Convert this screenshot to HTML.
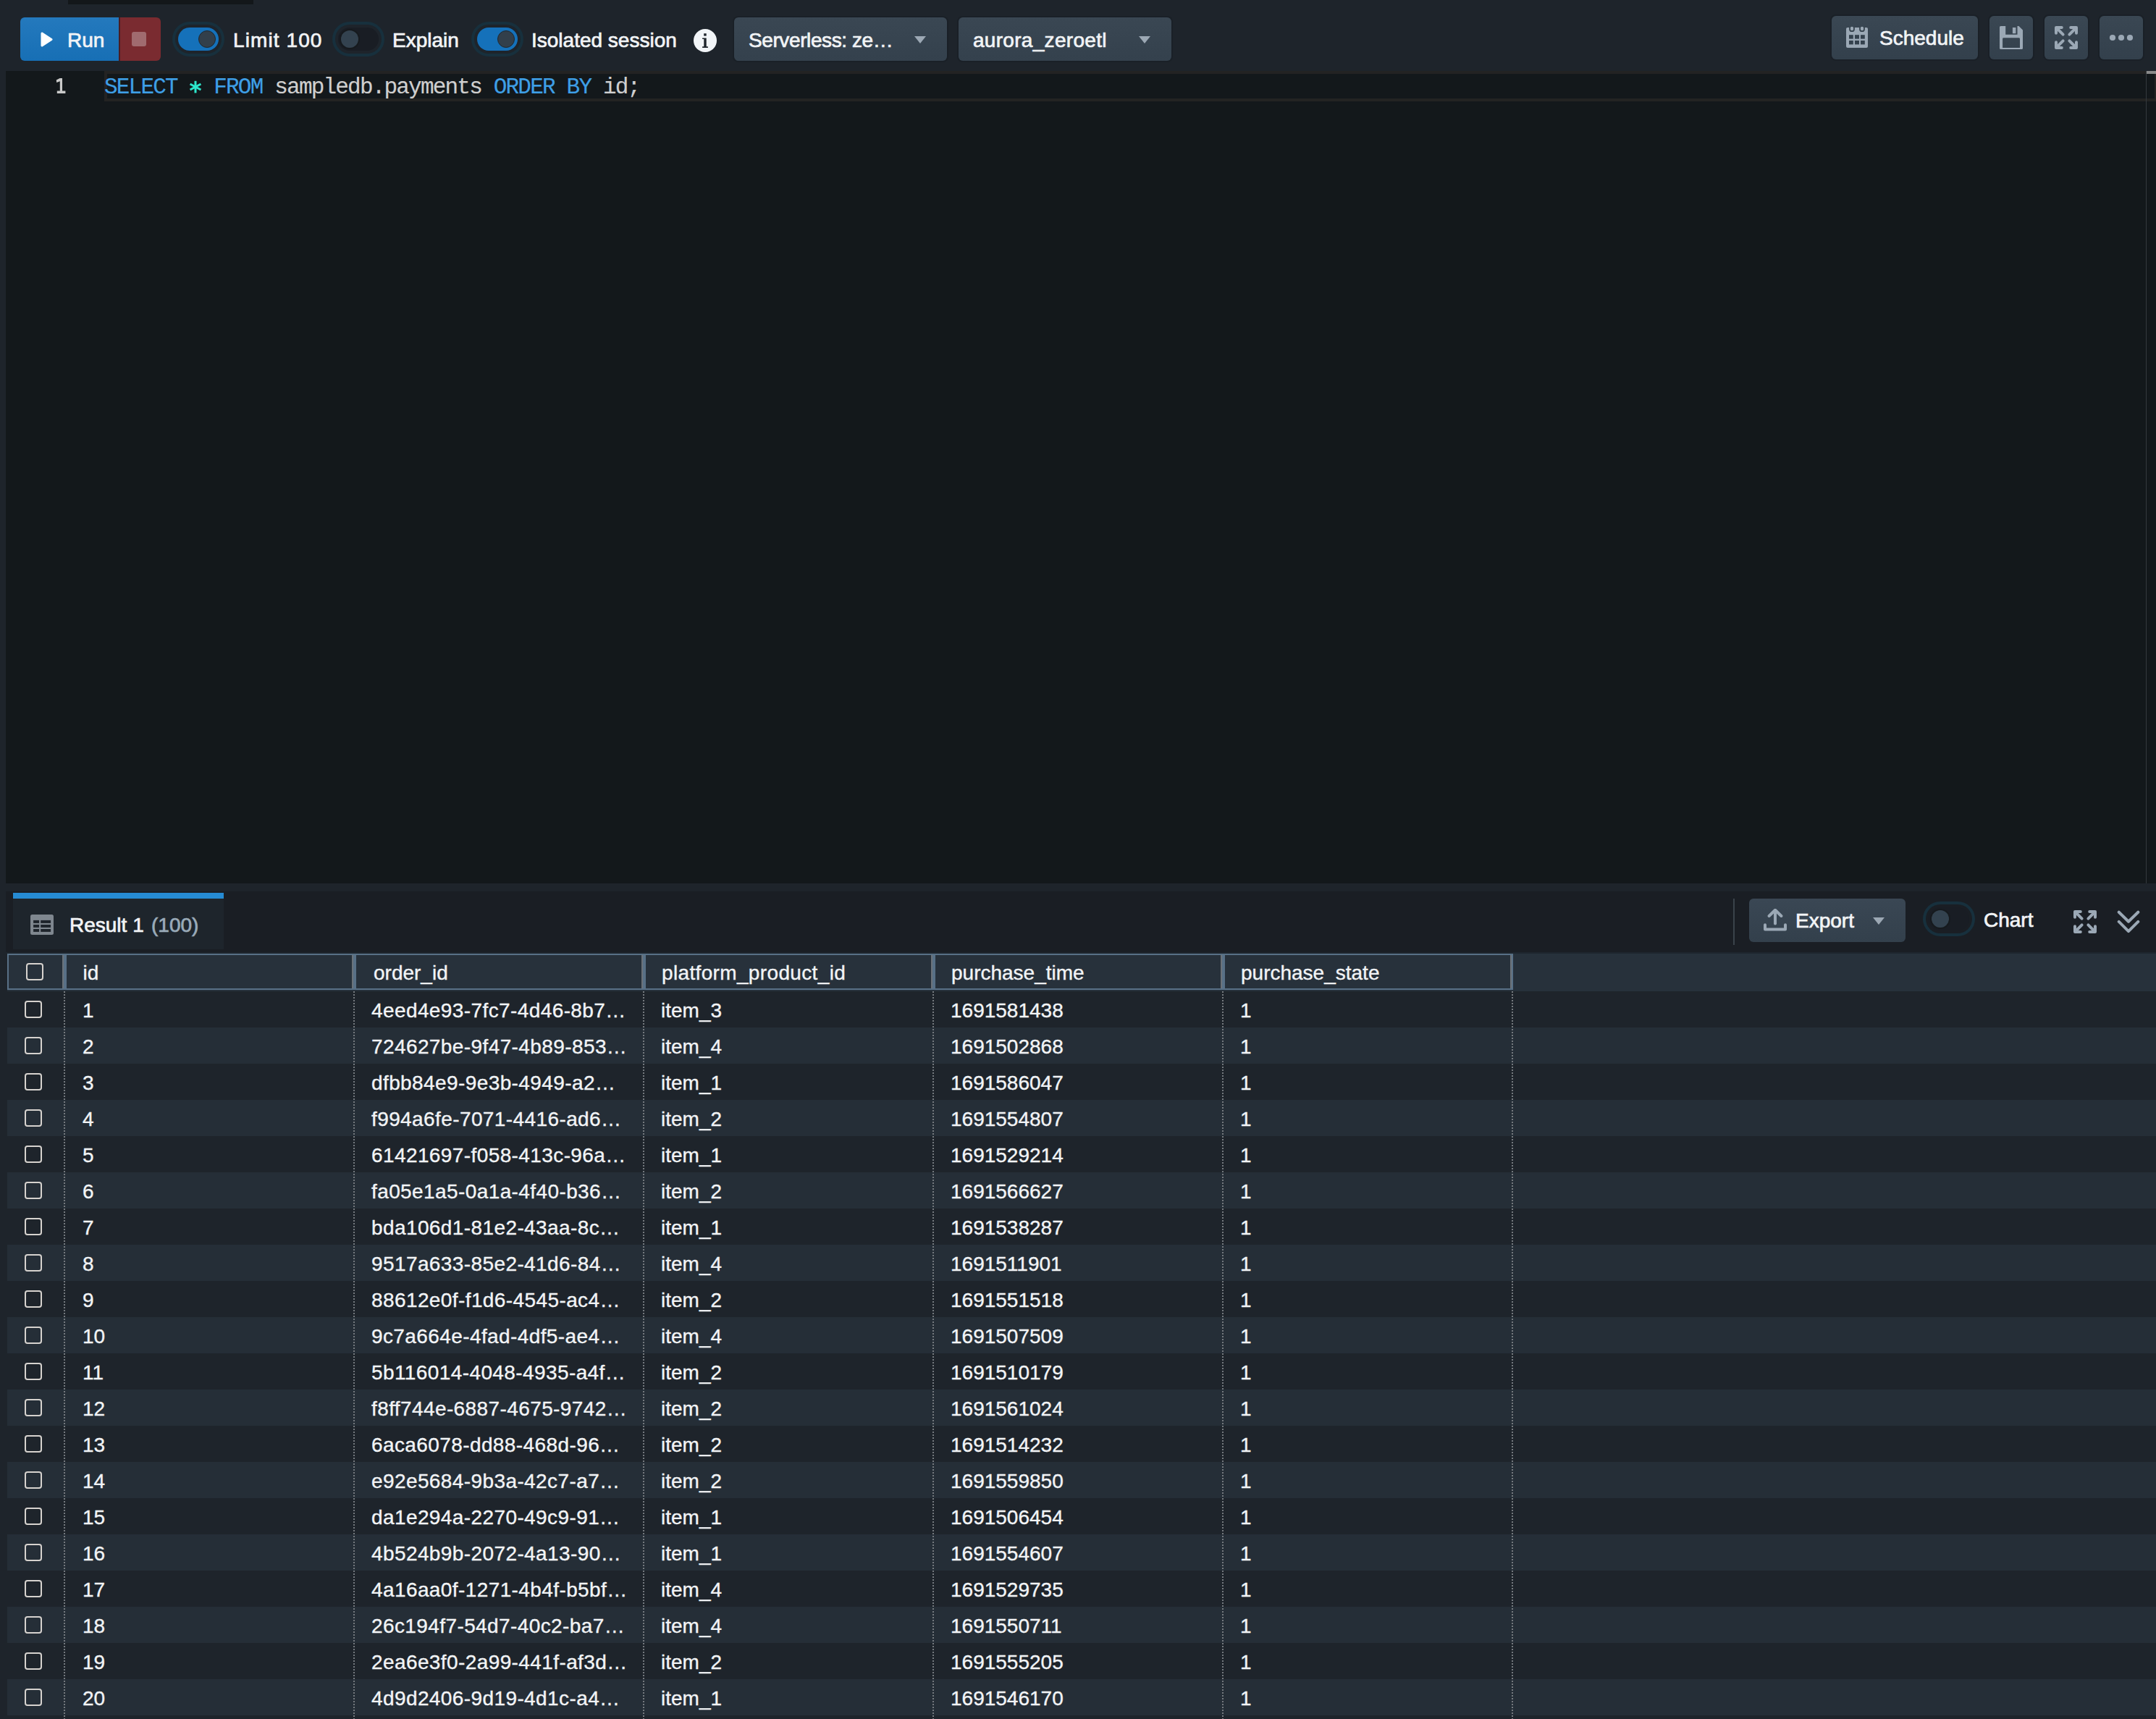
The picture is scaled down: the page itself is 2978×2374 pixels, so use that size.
<!DOCTYPE html>
<html><head><meta charset="utf-8"><title>Query editor</title>
<style>
html,body{margin:0;padding:0}
body{width:2978px;height:2374px;overflow:hidden;position:relative;background:#1e242b;font-family:"Liberation Sans",sans-serif;color:#f2f4f6;font-size:28px;-webkit-text-stroke:0.35px currentColor}
.abs{position:absolute}
#tabstrip{left:94px;top:0;width:256px;height:6px;background:#13171a}
/* run button */
#run{left:28px;top:24px;width:136px;height:60px;border-radius:6px 0 0 6px;background:linear-gradient(#2479bd,#176fb5)}
#run .tri{position:absolute;left:28px;top:20px;width:0;height:0;border-left:16px solid #fff;border-top:10px solid transparent;border-bottom:10px solid transparent;border-radius:2px}
#run .lbl{position:absolute;left:67px;top:0;line-height:60px;padding-top:2px}
#runsep{left:164px;top:24px;width:2px;height:60px;background:#4a1d22}
#stop{left:166px;top:24px;width:56px;height:60px;border-radius:0 6px 6px 0;background:#7a2b30}
#stop .sq{position:absolute;left:16px;top:20px;width:20px;height:20px;border-radius:3px;background:#a06b6f}
/* toggles */
.tg{position:absolute;width:72px;height:48px;border-radius:24px;background:#17303d}
.tg .track{position:absolute;left:8px;top:8px;width:56px;height:32px;border-radius:16px;background:#191d24;box-shadow:0 0 0 4px #1e242b}
.tg.on .track{background:#1571ba}
.tg .knob{position:absolute;top:4px;left:4px;width:24px;height:24px;border-radius:50%;background:#33424f;box-shadow:0 0 0 2px #161a1e}
.tg.on .knob{left:28px;top:4px;box-sizing:border-box;border:1.5px solid #1f2830;background:#323f4b;box-shadow:none}
#chartTg .track{box-shadow:0 0 0 4px #1a1e24}
.tl{position:absolute;line-height:60px;top:26px}
/* info */
#info{left:958px;top:40px;width:32px;height:32px;border-radius:50%;background:#f2f5f8}
/* dropdowns */
.dd{position:absolute;top:24px;height:60px;border-radius:6px;background:linear-gradient(#3a4753,#34414d);box-shadow:0 0 0 2px #1a2027}
.dd .t{position:absolute;left:20px;top:2px;line-height:60px}
.caret{position:absolute;width:0;height:0;border-top:10px solid #9ca8b4;border-left:8.5px solid transparent;border-right:8.5px solid transparent}
/* right buttons */
.btn{position:absolute;top:22px;height:60px;border-radius:6px;background:linear-gradient(#3a4753,#33404c);box-shadow:0 0 0 2px #1a2027}
/* editor */
#editor{left:8px;top:98px;width:2970px;height:1122px;background:#13181b;overflow:hidden}
#curline{left:136px;top:0;width:2828px;height:34px;border:4px solid #232323}
#ln{left:67px;top:0;line-height:42px;font-family:"Liberation Mono",monospace;color:#c8c8c8;font-size:32px;padding-top:3px}
#code{left:136px;top:0;line-height:42px;font-family:"Liberation Mono",monospace;color:#cfcfcf;font-size:31px;letter-spacing:-1.8px;white-space:pre;padding-top:2px;-webkit-text-stroke:0.15px currentColor}
.kw{color:#3e9fe6}.op{color:#2fe3c7}
#ruler{left:2956px;top:0;width:1px;height:1122px;background:#33393d}
#rulermark{left:2957px;top:0;width:14px;height:4px;background:#8a8a8a}
/* results */
#results{left:8px;top:1231px;width:2970px;height:84px;background:#1a1e24}
#tab{left:10px;top:2px;width:291px;height:78px;background:#1e252c}
#tab .bar{position:absolute;left:0;top:0;width:291px;height:8px;background:#268bd3}
#tabicon{left:24px;top:30px;width:32px;height:28px}
#tab .t{position:absolute;left:78px;top:24px;line-height:40px;padding-top:1px;white-space:pre}
#tab .cnt{color:#9aabb9}
#rsep{left:2386px;top:10px;width:2px;height:64px;background:#3a434b}
#export{left:2408px;top:10px;width:216px;height:60px;border-radius:6px;background:linear-gradient(#3a4754,#33404c)}
#hdrline{left:8px;top:1315px;width:2970px;height:2px;background:#1e262e}
#hdr{left:10px;top:1317px;width:2968px;height:52px;background:#27313b}
#hdrbox{left:10px;top:1317px;width:2076px;height:46px;border:2px solid #587086}
.hd{position:absolute;top:1317px;height:50px;line-height:50px;padding-top:2px}
.vd{position:absolute;top:1319px;height:46px;width:2px;background:#6b7279}
.vb{position:absolute;top:1317px;height:50px;width:4px;background:#587086}
.row{position:absolute;left:10px;width:2968px;height:50px}
.odd{background:#1e242b}.even{background:#252e37}
.row .c{position:absolute;top:0;line-height:50px;padding-top:2px;white-space:pre}
.cb{position:absolute;top:13px;width:20px;height:20px;border:2px solid #d6d2ce;border-radius:4px}
.dot{position:absolute;top:1369px;width:2px;height:1005px;background:repeating-linear-gradient(#74797e 0 2px,transparent 2px 4px)}
.tl,.dd .t,.bt,#run .lbl,#tab .t{-webkit-text-stroke:0.7px currentColor}

</style></head>
<body>
<div id="tabstrip" class="abs"></div>
<div id="run" class="abs"><svg class="abs" style="left:28px;top:20px" width="17" height="21" viewBox="0 0 17 21"><path d="M2,2 L15,10.5 L2,19 Z" fill="#fff" stroke="#fff" stroke-width="3" stroke-linejoin="round"/></svg><span class="lbl" style="left:65px">Run</span></div>
<div id="runsep" class="abs"></div>
<div id="stop" class="abs"><div class="sq"></div></div>

<div class="tg on" style="left:238px;top:30px"><div class="track"><div class="knob"></div></div></div>
<span class="tl" style="left:322px;letter-spacing:1.1px">Limit 100</span>
<div class="tg" style="left:459px;top:30px"><div class="track"><div class="knob"></div></div></div>
<span class="tl" style="left:542px">Explain</span>
<div class="tg on" style="left:651px;top:30px"><div class="track"><div class="knob"></div></div></div>
<span class="tl" style="left:734px">Isolated session</span>
<svg class="abs" style="left:958px;top:40px" width="32" height="32" viewBox="0 0 32 32"><circle cx="16" cy="16" r="16" fill="#f2f5f8"/><rect x="14.2" y="6.2" width="3.5" height="3.4" fill="#1e242b"/><path d="M12.1,12.4 H17.7 V24.3 H19.9 V26 H12.1 V24.3 H14.3 V14 H12.1 Z" fill="#1e242b"/></svg>

<div class="dd" style="left:1014px;width:294px"><span class="t" style="letter-spacing:-0.4px">Serverless: ze…</span><div class="caret" style="left:249px;top:26px"></div></div>
<div class="dd" style="left:1324px;width:294px"><span class="t" style="letter-spacing:0.3px">aurora_zeroetl</span><div class="caret" style="left:249px;top:26px"></div></div>

<div class="btn" style="left:2530px;width:202px">
 <svg class="abs" style="left:20px;top:14px" width="30" height="30" viewBox="0 0 30 30"><rect x="0" y="2" width="30" height="28" rx="2" fill="#9ba8b5"/><rect x="4" y="12.2" width="5.8" height="5.4" fill="#34414d"/><rect x="12" y="12.2" width="6" height="5.4" fill="#34414d"/><rect x="20" y="12.2" width="5.8" height="5.4" fill="#34414d"/><rect x="4" y="20" width="5.8" height="5.4" fill="#34414d"/><rect x="12" y="20" width="6" height="5.4" fill="#34414d"/><rect x="20" y="20" width="5.8" height="5.4" fill="#34414d"/><rect x="5" y="-0.2" width="6" height="7.4" rx="3" fill="#9ba8b5" stroke="#37444f" stroke-width="1.8"/><rect x="19" y="-0.2" width="6" height="7.4" rx="3" fill="#9ba8b5" stroke="#37444f" stroke-width="1.8"/></svg>
 <span class="abs bt" style="left:66px;top:1px;line-height:60px">Schedule</span>
</div>
<div class="btn" style="left:2748px;width:60px">
 <svg class="abs" style="left:14px;top:14px" width="32" height="32" viewBox="0 0 32 32"><path fill-rule="evenodd" fill="#9ba8b5" d="M1.5,0 H8.2 V11.7 H24.5 V0 H26.5 L32,5.5 V30.5 Q32,32 30.5,32 H1.5 Q0,32 0,30.5 V1.5 Q0,0 1.5,0 Z M5.5,16.3 Q4.1,16.3 4.1,17.7 V30 H28 V17.7 Q28,16.3 26.6,16.3 Z"/><rect x="17.9" y="2" width="4.5" height="8.2" fill="#9ba8b5"/></svg>
</div>
<div class="btn" style="left:2824px;width:60px">
 <svg class="abs" style="left:14px;top:14px" width="32" height="32" viewBox="0 0 32 32"><g fill="none" stroke="#9ba8b5" stroke-width="4" stroke-linecap="round" stroke-linejoin="round"><path d="M2,9.8 V2 H9.8 M3,3 L11.6,11.6"/><path d="M22.2,2 H30 V9.8 M29,3 L20.4,11.6"/><path d="M2,22.2 V30 H9.8 M3,29 L11.6,20.4"/><path d="M22.2,30 H30 V22.2 M29,29 L20.4,20.4"/></g></svg>
</div>
<div class="btn" style="left:2900px;width:60px">
 <svg class="abs" style="left:0;top:0" width="60" height="60" viewBox="0 0 60 60"><g fill="#9ba8b5"><circle cx="18" cy="30" r="4.1"/><circle cx="30" cy="30" r="4.1"/><circle cx="42" cy="30" r="4.1"/></g></svg>
</div>

<div id="editor" class="abs">
 <div id="curline" class="abs"></div>
 <svg class="abs" style="left:58px;top:2px" width="40" height="40" viewBox="0 0 40 40"><path d="M11.8,10.4 L16.6,7.9 H20 V25.6 H24.4 V29 H12.8 V25.6 H16.8 V12.2 L12.2,14 Z" fill="#c9c9c9"/></svg>
 <div id="code" class="abs"><span class="kw">SELECT</span> <span class="op" style="position:relative;color:transparent">*<svg style="position:absolute;left:-1.3px;top:7.4px" width="20" height="20" viewBox="0 0 20 20"><g stroke="#2de6cc" stroke-width="3" stroke-linecap="butt"><path d="M10,1.8 V18.4"/><path d="M2.6,6 L17.4,14"/><path d="M2.6,14 L17.4,6"/></g></svg></span> <span class="kw">FROM</span> sampledb.payments <span class="kw">ORDER</span> <span class="kw">BY</span> id;</div>
 <div id="ruler" class="abs"></div>
 <div id="rulermark" class="abs"></div>
</div>

<div id="results" class="abs">
 <div id="tab" class="abs"><div class="bar"></div>
  <svg id="tabicon" class="abs" width="32" height="28" viewBox="0 0 32 28"><rect width="32" height="28" rx="2.5" fill="#7f878f"/><g fill="#1e242b"><rect x="4.1" y="7.9" width="8" height="4"/><rect x="14.2" y="7.9" width="13.9" height="4"/><rect x="4.1" y="14" width="8" height="3.9"/><rect x="14.2" y="14" width="13.9" height="3.9"/><rect x="4.1" y="20" width="8" height="3.9"/><rect x="14.2" y="20" width="13.9" height="3.9"/></g></svg>
  <span class="t">Result 1</span><span class="t cnt" style="left:191px">(100)</span>
 </div>
 <div id="rsep" class="abs"></div>
 <div id="export" class="abs">
  <svg class="abs" style="left:20px;top:14px" width="32" height="32" viewBox="0 0 32 32"><g fill="none" stroke="#9ba8b5" stroke-width="4" stroke-linecap="round" stroke-linejoin="round"><path d="M16,3 V20.6"/><path d="M7.6,10 L16,1.8 L24.4,10"/><path d="M2,22.2 V28.6 H30 V22.2"/></g></svg>
  <span class="abs bt" style="left:64px;top:1px;line-height:60px">Export</span>
  <div class="caret" style="left:171px;top:26px"></div>
 </div>
 <div class="tg" id="chartTg" style="left:2648px;top:14px"><div class="track"><div class="knob"></div></div></div>
 <span class="abs bt" style="left:2732px;top:10px;line-height:60px">Chart</span>
 <svg class="abs" style="left:2856px;top:26px" width="32" height="32" viewBox="0 0 32 32"><g fill="none" stroke="#9ba8b5" stroke-width="4" stroke-linecap="round" stroke-linejoin="round"><path d="M2,9.8 V2 H9.8 M3,3 L11.6,11.6"/><path d="M22.2,2 H30 V9.8 M29,3 L20.4,11.6"/><path d="M2,22.2 V30 H9.8 M3,29 L11.6,20.4"/><path d="M22.2,30 H30 V22.2 M29,29 L20.4,20.4"/></g></svg>
 <svg class="abs" style="left:2916px;top:26px" width="32" height="32" viewBox="0 0 32 32"><g fill="none" stroke="#9ba8b5" stroke-width="4" stroke-linecap="round" stroke-linejoin="round"><path d="M2.75,2.7 L16,15.7 L29.3,2.7"/><path d="M2.75,15.9 L16,29.2 L29.3,15.9"/></g></svg>
</div>

<div id="hdrline" class="abs"></div>
<div id="hdr" class="abs"></div>
<div id="hdrbox" class="abs"></div>
<div class="cb" style="left:36px;top:1330px"></div>
<div class="vd" style="left:86px"></div><div class="vb" style="left:88px"></div>
<div class="vd" style="left:486px"></div><div class="vb" style="left:488px"></div>
<div class="vd" style="left:886px"></div><div class="vb" style="left:888px"></div>
<div class="vd" style="left:1286px"></div><div class="vb" style="left:1288px"></div>
<div class="vd" style="left:1686px"></div><div class="vb" style="left:1688px"></div>
<div class="vd" style="left:2086px"></div>
<span class="hd" style="left:114.5px">id</span>
<span class="hd" style="left:516px">order_id</span>
<span class="hd" style="left:914px;letter-spacing:0.35px">platform_product_id</span>
<span class="hd" style="left:1314px">purchase_time</span>
<span class="hd" style="left:1714px">purchase_state</span>

<div class="row odd" style="top:1369px"><div class="cb" style="left:24px"></div><span class="c" style="left:104px">1</span><span class="c" style="left:503px;letter-spacing:0.4px">4eed4e93-7fc7-4d46-8b7…</span><span class="c" style="left:903px">item_3</span><span class="c" style="left:1303px">1691581438</span><span class="c" style="left:1703px">1</span></div>
<div class="row even" style="top:1419px"><div class="cb" style="left:24px"></div><span class="c" style="left:104px">2</span><span class="c" style="left:503px;letter-spacing:0.4px">724627be-9f47-4b89-853…</span><span class="c" style="left:903px">item_4</span><span class="c" style="left:1303px">1691502868</span><span class="c" style="left:1703px">1</span></div>
<div class="row odd" style="top:1469px"><div class="cb" style="left:24px"></div><span class="c" style="left:104px">3</span><span class="c" style="left:503px;letter-spacing:0.4px">dfbb84e9-9e3b-4949-a2…</span><span class="c" style="left:903px">item_1</span><span class="c" style="left:1303px">1691586047</span><span class="c" style="left:1703px">1</span></div>
<div class="row even" style="top:1519px"><div class="cb" style="left:24px"></div><span class="c" style="left:104px">4</span><span class="c" style="left:503px;letter-spacing:0.4px">f994a6fe-7071-4416-ad6…</span><span class="c" style="left:903px">item_2</span><span class="c" style="left:1303px">1691554807</span><span class="c" style="left:1703px">1</span></div>
<div class="row odd" style="top:1569px"><div class="cb" style="left:24px"></div><span class="c" style="left:104px">5</span><span class="c" style="left:503px;letter-spacing:0.4px">61421697-f058-413c-96a…</span><span class="c" style="left:903px">item_1</span><span class="c" style="left:1303px">1691529214</span><span class="c" style="left:1703px">1</span></div>
<div class="row even" style="top:1619px"><div class="cb" style="left:24px"></div><span class="c" style="left:104px">6</span><span class="c" style="left:503px;letter-spacing:0.4px">fa05e1a5-0a1a-4f40-b36…</span><span class="c" style="left:903px">item_2</span><span class="c" style="left:1303px">1691566627</span><span class="c" style="left:1703px">1</span></div>
<div class="row odd" style="top:1669px"><div class="cb" style="left:24px"></div><span class="c" style="left:104px">7</span><span class="c" style="left:503px;letter-spacing:0.4px">bda106d1-81e2-43aa-8c…</span><span class="c" style="left:903px">item_1</span><span class="c" style="left:1303px">1691538287</span><span class="c" style="left:1703px">1</span></div>
<div class="row even" style="top:1719px"><div class="cb" style="left:24px"></div><span class="c" style="left:104px">8</span><span class="c" style="left:503px;letter-spacing:0.4px">9517a633-85e2-41d6-84…</span><span class="c" style="left:903px">item_4</span><span class="c" style="left:1303px">1691511901</span><span class="c" style="left:1703px">1</span></div>
<div class="row odd" style="top:1769px"><div class="cb" style="left:24px"></div><span class="c" style="left:104px">9</span><span class="c" style="left:503px;letter-spacing:0.4px">88612e0f-f1d6-4545-ac4…</span><span class="c" style="left:903px">item_2</span><span class="c" style="left:1303px">1691551518</span><span class="c" style="left:1703px">1</span></div>
<div class="row even" style="top:1819px"><div class="cb" style="left:24px"></div><span class="c" style="left:104px">10</span><span class="c" style="left:503px;letter-spacing:0.4px">9c7a664e-4fad-4df5-ae4…</span><span class="c" style="left:903px">item_4</span><span class="c" style="left:1303px">1691507509</span><span class="c" style="left:1703px">1</span></div>
<div class="row odd" style="top:1869px"><div class="cb" style="left:24px"></div><span class="c" style="left:104px">11</span><span class="c" style="left:503px;letter-spacing:0.4px">5b116014-4048-4935-a4f…</span><span class="c" style="left:903px">item_2</span><span class="c" style="left:1303px">1691510179</span><span class="c" style="left:1703px">1</span></div>
<div class="row even" style="top:1919px"><div class="cb" style="left:24px"></div><span class="c" style="left:104px">12</span><span class="c" style="left:503px;letter-spacing:0.4px">f8ff744e-6887-4675-9742…</span><span class="c" style="left:903px">item_2</span><span class="c" style="left:1303px">1691561024</span><span class="c" style="left:1703px">1</span></div>
<div class="row odd" style="top:1969px"><div class="cb" style="left:24px"></div><span class="c" style="left:104px">13</span><span class="c" style="left:503px;letter-spacing:0.4px">6aca6078-dd88-468d-96…</span><span class="c" style="left:903px">item_2</span><span class="c" style="left:1303px">1691514232</span><span class="c" style="left:1703px">1</span></div>
<div class="row even" style="top:2019px"><div class="cb" style="left:24px"></div><span class="c" style="left:104px">14</span><span class="c" style="left:503px;letter-spacing:0.4px">e92e5684-9b3a-42c7-a7…</span><span class="c" style="left:903px">item_2</span><span class="c" style="left:1303px">1691559850</span><span class="c" style="left:1703px">1</span></div>
<div class="row odd" style="top:2069px"><div class="cb" style="left:24px"></div><span class="c" style="left:104px">15</span><span class="c" style="left:503px;letter-spacing:0.4px">da1e294a-2270-49c9-91…</span><span class="c" style="left:903px">item_1</span><span class="c" style="left:1303px">1691506454</span><span class="c" style="left:1703px">1</span></div>
<div class="row even" style="top:2119px"><div class="cb" style="left:24px"></div><span class="c" style="left:104px">16</span><span class="c" style="left:503px;letter-spacing:0.4px">4b524b9b-2072-4a13-90…</span><span class="c" style="left:903px">item_1</span><span class="c" style="left:1303px">1691554607</span><span class="c" style="left:1703px">1</span></div>
<div class="row odd" style="top:2169px"><div class="cb" style="left:24px"></div><span class="c" style="left:104px">17</span><span class="c" style="left:503px;letter-spacing:0.4px">4a16aa0f-1271-4b4f-b5bf…</span><span class="c" style="left:903px">item_4</span><span class="c" style="left:1303px">1691529735</span><span class="c" style="left:1703px">1</span></div>
<div class="row even" style="top:2219px"><div class="cb" style="left:24px"></div><span class="c" style="left:104px">18</span><span class="c" style="left:503px;letter-spacing:0.4px">26c194f7-54d7-40c2-ba7…</span><span class="c" style="left:903px">item_4</span><span class="c" style="left:1303px">1691550711</span><span class="c" style="left:1703px">1</span></div>
<div class="row odd" style="top:2269px"><div class="cb" style="left:24px"></div><span class="c" style="left:104px">19</span><span class="c" style="left:503px;letter-spacing:0.4px">2ea6e3f0-2a99-441f-af3d…</span><span class="c" style="left:903px">item_2</span><span class="c" style="left:1303px">1691555205</span><span class="c" style="left:1703px">1</span></div>
<div class="row even" style="top:2319px"><div class="cb" style="left:24px"></div><span class="c" style="left:104px">20</span><span class="c" style="left:503px;letter-spacing:0.4px">4d9d2406-9d19-4d1c-a4…</span><span class="c" style="left:903px">item_1</span><span class="c" style="left:1303px">1691546170</span><span class="c" style="left:1703px">1</span></div>

<div class="dot" style="left:88px"></div>
<div class="dot" style="left:488px"></div>
<div class="dot" style="left:888px"></div>
<div class="dot" style="left:1288px"></div>
<div class="dot" style="left:1688px"></div>
<div class="dot" style="left:2088px"></div>

</body></html>
